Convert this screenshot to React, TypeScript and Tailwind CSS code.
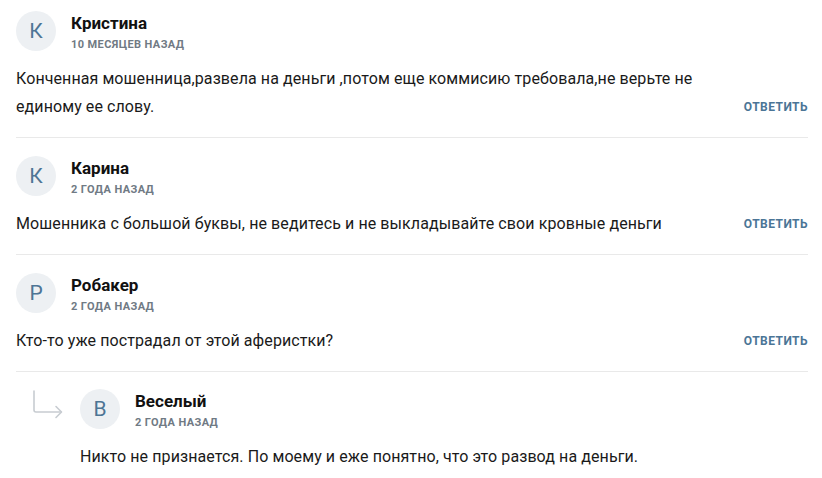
import React from "react";

type C = { letter: string; name: string; date: string; text: string };

const comments: C[] = [
  {
    letter: "К",
    name: "Кристина",
    date: "10 месяцев назад",
    text: "Конченная мошенница,развела на деньги ,потом еще коммисию требовала,не верьте не единому ее слову.",
  },
  {
    letter: "К",
    name: "Карина",
    date: "2 года назад",
    text: "Мошенника с большой буквы, не ведитесь и не выкладывайте свои кровные деньги",
  },
  {
    letter: "Р",
    name: "Робакер",
    date: "2 года назад",
    text: "Кто-то уже пострадал от этой аферистки?",
  },
];

function Header({ c }: { c: C }) {
  return (
    <div className="flex items-start gap-[15px] h-10">
      <div className="w-10 h-10 shrink-0 rounded-full bg-[#edf0f3] flex items-center justify-center text-[21px] text-[#4d7595] leading-none">
        {c.letter}
      </div>
      <div className="flex flex-col pt-[2px]">
        <div className="text-[17px] leading-[20px] font-bold text-[#111]">{c.name}</div>
        <div className="mt-[5px] text-[11px] leading-[14px] font-bold uppercase text-[#707a84] tracking-[0.4px]">
          {c.date}
        </div>
      </div>
    </div>
  );
}

export default function App() {
  return (
    <div
      className="w-[822px] h-[478px] bg-white pl-4 pr-[14px] pt-[11px] overflow-hidden"
      style={{ fontFamily: "Roboto, 'Liberation Sans', sans-serif" }}
    >
      {comments.map((c, i) => (
        <div key={i} className={`border-b border-[#e9e9e9] pb-[16px] ${i > 0 ? "pt-[18px]" : ""}`}>
          <Header c={c} />
          <div className="flex items-end gap-6 mt-[14px]">
            <div className="flex-1 text-[16px] leading-[28px] text-[#1a1a1a] tracking-[0.09px]">{c.text}</div>
            <button className="text-[12px] leading-[28px] font-bold uppercase text-[#4b7596] tracking-[0.45px]">
              Ответить
            </button>
          </div>
        </div>
      ))}
      <div className="relative pl-16 pt-[17px]">
        <svg
          className="absolute left-[16px] top-[18px]"
          width="32"
          height="32"
          viewBox="0 0 32 32"
          fill="none"
          stroke="#c7ccd1"
          strokeWidth="1.6"
          strokeLinecap="round"
          strokeLinejoin="round"
        >
          <path d="M2 1 V20 Q2 22 4 22 H29" />
          <path d="M24 16.5 L29.5 22 L24 27.5" />
        </svg>
        <Header c={{ letter: "В", name: "Веселый", date: "2 года назад", text: "" }} />
        <div className="mt-[14px] text-[16px] leading-[28px] text-[#1a1a1a] tracking-[0.09px]">
          Никто не признается. По моему и еже понятно, что это развод на деньги.
        </div>
      </div>
    </div>
  );
}
